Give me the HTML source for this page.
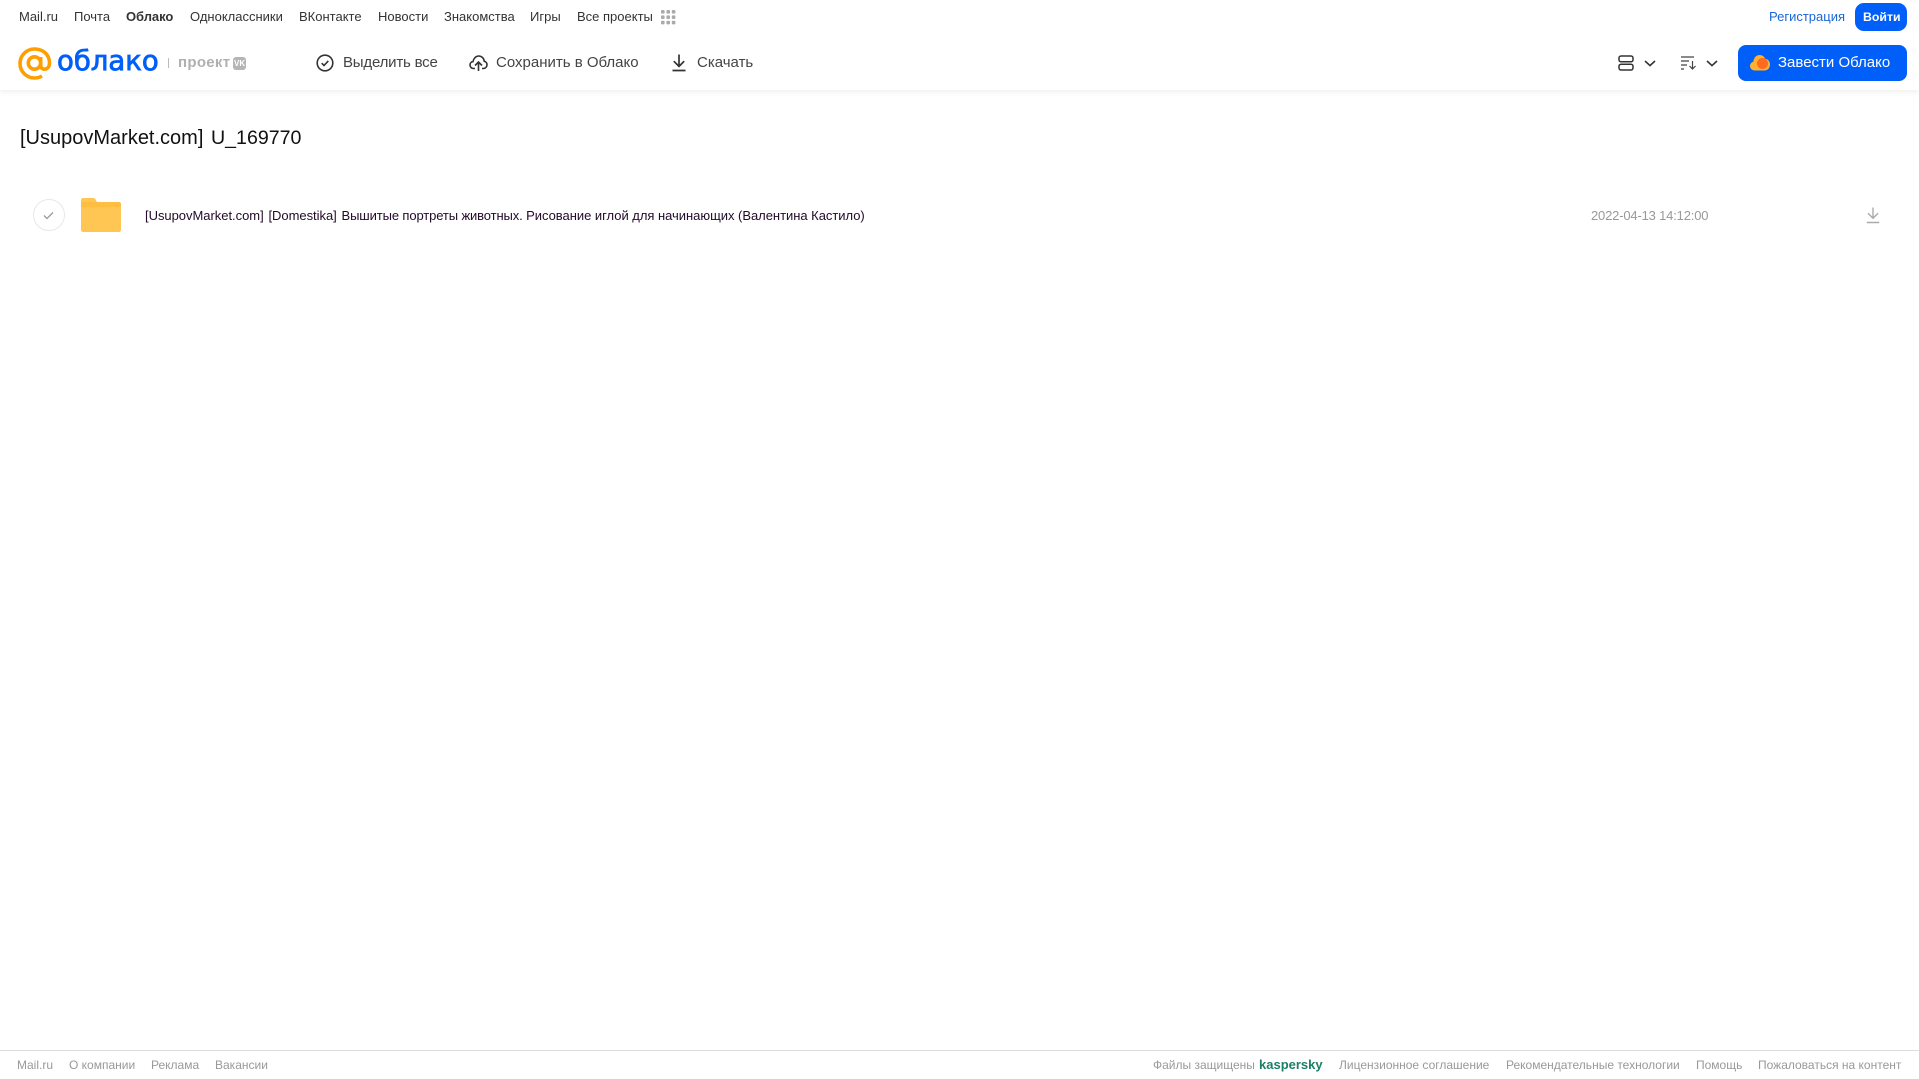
<!DOCTYPE html>
<html lang="ru"><head><meta charset="utf-8"><title>Облако</title>
<style>
html,body{margin:0;padding:0;background:#fff;width:1919px;height:1079px;overflow:hidden;font-family:"Liberation Sans",sans-serif}
.t{position:absolute;white-space:nowrap;line-height:20px}
.n{top:7px;font-size:13px;color:#333}
.b{top:53px;font-size:15px;color:#444}
.f{top:1055px;font-size:12px;color:#999}
svg{position:absolute;overflow:visible}
</style></head><body>
<div style="position:absolute;left:0;top:0;width:1919px;height:90px;background:#fff;box-shadow:0 2px 6px rgba(0,0,0,.07)"></div>

<span class="t n" style="left:19px">Mail.ru</span>
<span class="t n" style="left:74px">Почта</span>
<span class="t n" style="left:126px;font-weight:bold;letter-spacing:-.05px">Облако</span>
<span class="t n" style="left:190px">Одноклассники</span>
<span class="t n" style="left:299px">ВКонтакте</span>
<span class="t n" style="left:378px">Новости</span>
<span class="t n" style="left:444px">Знакомства</span>
<span class="t n" style="left:530px">Игры</span>
<span class="t n" style="left:577px">Все проекты</span>
<svg style="left:661px;top:10px" width="15" height="15" fill="#aaa"><rect x="0" y="0" width="3.6" height="3.6" rx="1"/><rect x="5.4" y="0" width="3.6" height="3.6" rx="1"/><rect x="10.8" y="0" width="3.6" height="3.6" rx="1"/><rect x="0" y="5.4" width="3.6" height="3.6" rx="1"/><rect x="5.4" y="5.4" width="3.6" height="3.6" rx="1"/><rect x="10.8" y="5.4" width="3.6" height="3.6" rx="1"/><rect x="0" y="10.8" width="3.6" height="3.6" rx="1"/><rect x="5.4" y="10.8" width="3.6" height="3.6" rx="1"/><rect x="10.8" y="10.8" width="3.6" height="3.6" rx="1"/></svg>

<span class="t n" style="left:1769px;color:#1a66d6">Регистрация</span>
<div style="position:absolute;left:1855px;top:3px;width:52px;height:28px;border-radius:9px;background:#005ff9"></div>
<span class="t n" style="left:1863px;color:#fff;font-weight:bold;font-size:12.3px">Войти</span>

<!-- logo -->
<svg style="left:18px;top:47px" width="34" height="33" viewBox="0 0 34 33" fill="none" stroke="#ff9e00" stroke-width="3.6"><circle cx="16.5" cy="16" r="6.2"/><path d="M22.7 10v8.500c0 5.200 8.800 5.200 8.800-2.500C31.500 7.500 25 2 16.500 2 8.500 2 2 8.500 2 16.500S8.500 31 16.500 31c3 0 5.300-.7 7.500-2"/></svg>
<span class="t" style="left:57px;top:46px;line-height:30px;font-size:27.5px;color:#005ff9;font-family:'DejaVu Sans',sans-serif;-webkit-text-stroke:.8px #005ff9">облако</span>
<div style="position:absolute;left:168px;top:58px;width:1px;height:10px;background:#bbb"></div>
<span class="t" style="left:178px;top:53px;font-size:15px;color:#b0b0b0;font-weight:bold;letter-spacing:.3px">проект</span>
<div style="position:absolute;left:233px;top:57px;width:13px;height:13px;border-radius:3px;background:#b5b5b5"></div>
<span class="t" style="left:234px;top:58px;font-size:8px;line-height:11px;color:#fff;font-weight:bold">VK</span>

<!-- toolbar -->
<svg style="left:316px;top:54px" width="18" height="18" viewBox="0 0 18 18" fill="none" stroke="#333" stroke-width="1.600"><circle cx="9" cy="9" r="7.800"/><path d="M5.700 9.200l2.300 2.300 4.300-4.600"/></svg>
<span class="t b" style="left:343px;letter-spacing:-.2px">Выделить все</span>
<svg style="left:469px;top:54px" width="19" height="18" viewBox="0 0 19 18" fill="none" stroke="#333" stroke-width="1.600"><path d="M6 14.500H4.500C2.500 14.500 1 13 1 11c0-1.800 1.300-3.200 3-3.400C4.500 4.500 6.800 2 9.800 2c2.900 0 5.200 2.300 5.500 5.300 1.600.3 2.700 1.700 2.700 3.400 0 2.100-1.600 3.800-3.500 3.800H13"/><path d="M9.500 17V8.500M6 11.500l3.500-3.500 3.500 3.500"/></svg>
<span class="t b" style="left:496px">Сохранить в Облако</span>
<svg style="left:672px;top:54px" width="14" height="18" viewBox="0 0 14 18" fill="none" stroke="#333" stroke-width="1.700"><path d="M7 0.500V12M1.800 7.200L7 12.400l5.200-5.200M.5 16.500h13"/></svg>
<span class="t b" style="left:697px">Скачать</span>

<svg style="left:1618px;top:55px" width="16" height="16" viewBox="0 0 16 16" fill="none" stroke="#333" stroke-width="1.500"><rect x="1" y="1" width="14" height="5.800" rx="2"/><rect x="1" y="9.200" width="14" height="5.800" rx="2"/></svg>
<svg style="left:1644px;top:60px" width="12" height="7" viewBox="0 0 12 7" fill="none" stroke="#333" stroke-width="1.600"><path d="M1 1l5 4.600L11 1"/></svg>
<svg style="left:1681px;top:56px" width="16" height="14" viewBox="0 0 16 14" fill="none" stroke="#444" stroke-width="1.200"><path d="M0 1h13M0 5h8M0 9h6M0 13h3M11.500 5v8M8.500 10l3 3 3-3"/></svg>
<svg style="left:1706px;top:60px" width="12" height="7" viewBox="0 0 12 7" fill="none" stroke="#333" stroke-width="1.600"><path d="M1 1l5 4.600L11 1"/></svg>

<div style="position:absolute;left:1738px;top:45px;width:169px;height:36px;border-radius:8px;background:#005ff9"></div>
<svg style="left:1750px;top:54px" width="20" height="17" viewBox="0 0 20 17"><path d="M5 16.500C2 16.500 0 14.500 0 12c0-2.200 1.500-3.800 3.300-4.300C3.800 3.500 6.500 1 9.500 1c2.700 0 4.800 1.600 5.700 3.800 2.800.3 4.800 2.700 4.800 5.700 0 3.500-2.500 6-5.500 6z" fill="#ffb02e"/><circle cx="12.500" cy="9.500" r="5.500" fill="#ff6a1f"/></svg>
<span class="t" style="left:1778px;top:53px;font-size:15px;color:#fff">Завести Облако</span>

<!-- content -->
<span class="t" style="left:20px;top:124px;line-height:28px;font-size:20px;color:#111">[UsupovMarket.com]</span>
<span class="t" style="left:211px;top:124px;line-height:28px;font-size:19.6px;color:#111">U_169770</span>

<div style="position:absolute;left:33px;top:199px;width:30px;height:30px;border:1px solid #e8e8e8;border-radius:50%"></div>
<svg style="left:43px;top:211px" width="11" height="9" viewBox="0 0 11 9" fill="none" stroke="#999" stroke-width="1.300"><path d="M1 4.500l3 3 6-6"/></svg>
<svg style="left:81px;top:198px" width="40" height="34" viewBox="0 0 40 34"><path d="M2 0h10c2 0 2.500 1 4 4h22c1 0 2 1 2 2v26c0 1-1 2-2 2H2c-1 0-2-1-2-2V2C0 1 1 0 2 0z" fill="#ffc654"/><path d="M0 5c0-1 1-1 2-1h36c1 0 2 .5 2 2v3H0z" fill="#ffb52e" opacity=".5"/></svg>
<span class="t" style="left:145px;top:206px;font-size:13px;letter-spacing:-.03px;color:#220a28"><span style="word-spacing:1.200px">[UsupovMarket.com] [Domestika] </span><span style="letter-spacing:-.12px">Вышитые портреты животных. </span>Рисование иглой для начинающих (Валентина Кастило)</span>
<span class="t" style="left:1591px;top:206px;font-size:13px;letter-spacing:-.18px;color:#999">2022-04-13 14:12:00</span>
<svg style="left:1866px;top:207px" width="14" height="17" viewBox="0 0 14 17" fill="none" stroke="#aaa" stroke-width="1.400"><path d="M7 0.500V11M2 6.200l5 5 5-5M.8 15.500h12.400"/></svg>

<!-- footer -->
<div style="position:absolute;left:0;top:1050px;width:1919px;height:1px;background:#ddd"></div>
<span class="t f" style="left:17px">Mail.ru</span>
<span class="t f" style="left:69px">О компании</span>
<span class="t f" style="left:151px">Реклама</span>
<span class="t f" style="left:215px">Вакансии</span>
<span class="t f" style="left:1153px">Файлы защищены</span>
<span class="t f" style="left:1259px;color:#1d7f66;font-weight:bold;font-size:13px">kaspersky</span>
<span class="t f" style="left:1339px">Лицензионное соглашение</span>
<span class="t f" style="left:1506px">Рекомендательные технологии</span>
<span class="t f" style="left:1696px">Помощь</span>
<span class="t f" style="left:1758px">Пожаловаться на контент</span>
</body></html>
